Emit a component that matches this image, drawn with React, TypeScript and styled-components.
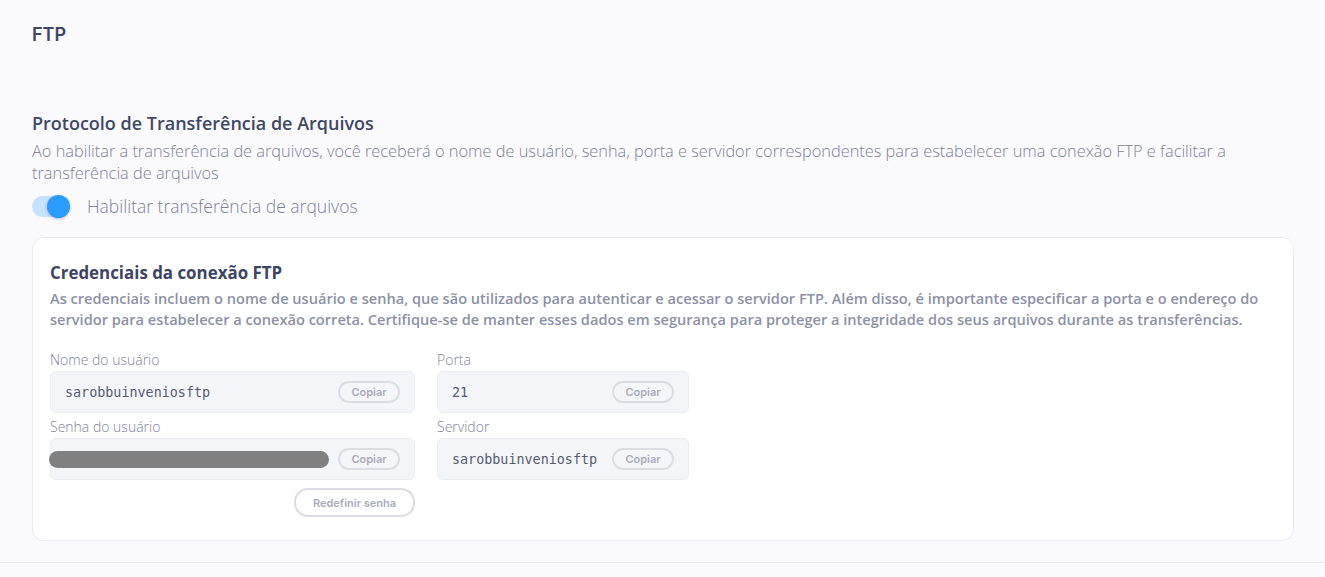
import React from 'react';
import styled, { createGlobalStyle } from 'styled-components';

const GlobalStyle = createGlobalStyle`
  html, body {
    margin: 0;
    padding: 0;
    background: #fafafc;
    font-family: "Open Sans", "Noto Sans", sans-serif;
  }
`;

const Page = styled.div`
  box-sizing: border-box;
  height: 563px;
  padding: 24px 30px 0 32px;
  display: flex;
  flex-direction: column;
  border-bottom: 1px solid #e9eaef;
`;

const PageTitle = styled.h1`
  margin: 0;
  font-family: Inter, sans-serif;
  font-size: 18px;
  font-weight: 600;
  color: #3d4866;
  line-height: 22px;
`;

const Section = styled.section`
  margin-top: 65px;
  display: flex;
  flex-direction: column;
`;

const SectionTitle = styled.h2`
  margin: 0;
  font-size: 18px;
  font-weight: 600;
  color: #3f4865;
  line-height: 24px;
`;

const SectionText = styled.p`
  margin: 5px 0 0;
  font-size: 16.35px;
  font-weight: 300;
  color: #7c8198;
  line-height: 22px;
`;

const ToggleRow = styled.label`
  display: flex;
  align-items: center;
  gap: 17px;
  margin-top: 11px;
  font-size: 17.5px;
  font-weight: 300;
  line-height: 22px;
  color: #7c8198;
`;

const Track = styled.span<{ $on: boolean }>`
  position: relative;
  display: inline-block;
  width: 38px;
  height: 21px;
  border-radius: 11px;
  background: ${(p) => (p.$on ? '#c6e2ff' : '#dfe2ea')};
`;

const Knob = styled.span<{ $on: boolean }>`
  position: absolute;
  top: -1px;
  left: ${(p) => (p.$on ? '15px' : '0')};
  width: 23px;
  height: 23px;
  border-radius: 50%;
  background: #2a9bff;
  box-shadow: 0 1px 3px rgba(0, 0, 0, 0.25);
`;

const Card = styled.div`
  margin-top: 20px;
  background: #ffffff;
  border: 1px solid #eaebf0;
  border-radius: 12px;
  padding: 24px 17px 23px 17px;
  width: 1262px;
  box-sizing: border-box;
`;

const CardTitle = styled.h3`
  margin: 0;
  font-size: 16.9px;
  font-weight: 700;
  color: #3c4563;
  line-height: 22px;
`;

const CardText = styled.p`
  margin: 4px 0 0;
  font-size: 14.6px;
  font-weight: 600;
  color: #8c91a6;
  line-height: 21px;
`;

const FieldGrid = styled.div`
  margin-top: 20px;
  display: grid;
  grid-template-columns: 365px 252px;
  column-gap: 22px;
  row-gap: 4px;
`;

const Field = styled.div`
  display: flex;
  flex-direction: column;
`;

const Label = styled.span`
  font-size: 14px;
  font-weight: 300;
  color: #7e8399;
  line-height: 20px;
  height: 21px;
`;

const ValueBox = styled.div`
  height: 42px;
  box-sizing: border-box;
  display: flex;
  align-items: center;
  justify-content: space-between;
  padding: 0 14px 0 14px;
  background: #f4f5f9;
  border: 1px solid #ebecf1;
  border-radius: 6px;
`;

const Value = styled.span`
  font-family: "DejaVu Sans Mono", monospace;
  font-size: 13.4px;
  color: #555c6f;
`;

const Redacted = styled.span`
  display: block;
  margin-left: -16px;
  width: 280px;
  height: 17px;
  border-radius: 9px;
  background: #808080;
`;

const PillButton = styled.button<{ $wide?: boolean }>`
  font-family: Inter, "Liberation Sans", sans-serif;
  font-size: 11px;
  font-weight: 600;
  color: #a9acbb;
  background: transparent;
  border: 2px solid #dcdde4;
  border-radius: 14px;
  height: ${(p) => (p.$wide ? '29px' : '22px')};
  width: ${(p) => (p.$wide ? '121px' : '62px')};
  padding: 0;
  cursor: pointer;
`;

const Actions = styled.div`
  display: flex;
  justify-content: flex-end;
  margin-top: 8px;
`;

export default function App() {
  return (
    <>
      <GlobalStyle />
      <Page>
        <PageTitle>FTP</PageTitle>
        <Section>
          <SectionTitle>Protocolo de Transferência de Arquivos</SectionTitle>
          <SectionText>
            Ao habilitar a transferência de arquivos, você receberá o nome de usuário, senha, porta e servidor
            correspondentes para estabelecer uma conexão FTP e facilitar a transferência de arquivos
          </SectionText>
          <ToggleRow>
            <Track $on>
              <Knob $on />
            </Track>
            Habilitar transferência de arquivos
          </ToggleRow>
          <Card>
            <CardTitle>Credenciais da conexão FTP</CardTitle>
            <CardText>
              As credenciais incluem o nome de usuário e senha, que são utilizados para autenticar e acessar o
              servidor FTP. Além disso, é importante especificar a porta e o endereço do servidor para estabelecer a
              conexão correta. Certifique-se de manter esses dados em segurança para proteger a integridade dos seus
              arquivos durante as transferências.
            </CardText>
            <FieldGrid>
              <Field>
                <Label>Nome do usuário</Label>
                <ValueBox>
                  <Value>sarobbuinveniosftp</Value>
                  <PillButton>Copiar</PillButton>
                </ValueBox>
              </Field>
              <Field>
                <Label>Porta</Label>
                <ValueBox>
                  <Value>21</Value>
                  <PillButton>Copiar</PillButton>
                </ValueBox>
              </Field>
              <Field>
                <Label>Senha do usuário</Label>
                <ValueBox>
                  <Redacted />
                  <PillButton>Copiar</PillButton>
                </ValueBox>
                <Actions>
                  <PillButton $wide>Redefinir senha</PillButton>
                </Actions>
              </Field>
              <Field>
                <Label>Servidor</Label>
                <ValueBox>
                  <Value>sarobbuinveniosftp</Value>
                  <PillButton>Copiar</PillButton>
                </ValueBox>
              </Field>
            </FieldGrid>
          </Card>
        </Section>
      </Page>
    </>
  );
}
